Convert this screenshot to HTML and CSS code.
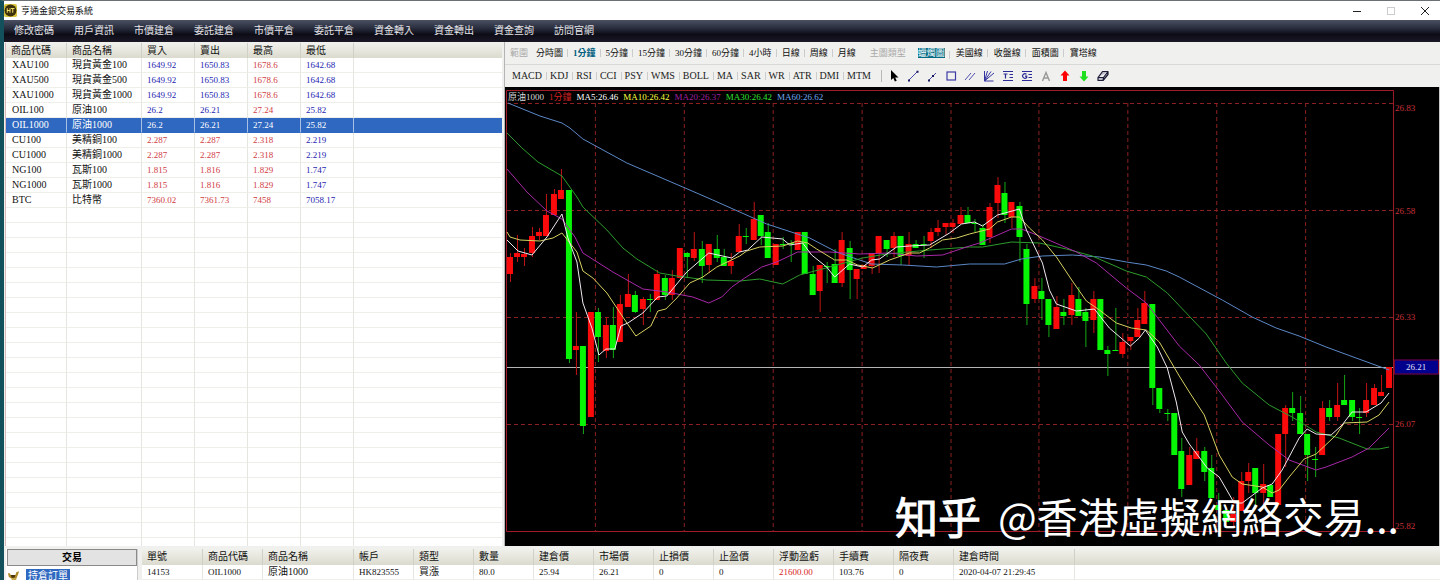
FILE: index.html
```html
<!DOCTYPE html>
<html lang="zh-Hant">
<head>
<meta charset="utf-8">
<meta name="viewport" content="width=device-width, initial-scale=1">
<title>亨通金銀交易系統</title>
<link rel="stylesheet" href="styles.css">
</head>
<body>
<div class="app">
  <header class="titlebar">
    <svg class="logo" viewBox="0 0 14 14" aria-hidden="true">
      <rect width="14" height="14" rx="2" fill="#d8c43c"/>
      <circle cx="7" cy="7" r="6.4" fill="#3a300c"/>
      <path d="M3.5 4.5v5M3.5 7h3M6.5 4.5v5M7.5 4.8h3.8M9.4 4.8v4.7" stroke="#f2dc62" stroke-width="1.1" fill="none"/>
    </svg>
    <h1 class="title">亨通金銀交易系統</h1>
    <div class="window-controls">
      <button type="button" aria-label="最小化"><svg viewBox="0 0 10 10"><path d="M1 5.5h8" stroke="#222"/></svg></button>
      <button type="button" aria-label="最大化" disabled><svg viewBox="0 0 10 10"><rect x="1.5" y="1.5" width="7" height="7" fill="none" stroke="#ccc"/></svg></button>
      <button type="button" aria-label="關閉"><svg viewBox="0 0 10 10"><path d="M1 1l8 8M9 1l-8 8" stroke="#222"/></svg></button>
    </div>
  </header>

  <nav class="menubar">
    <button type="button">修改密碼</button>
    <button type="button">用戶資訊</button>
    <button type="button">市價建倉</button>
    <button type="button">委託建倉</button>
    <button type="button">市價平倉</button>
    <button type="button">委託平倉</button>
    <button type="button">資金轉入</button>
    <button type="button">資金轉出</button>
    <button type="button">資金查詢</button>
    <button type="button">訪問官網</button>
  </nav>

  <main class="workspace">
    <section class="quotes-pane">
      <table class="grid quotes">
        <colgroup><col class="q-code"><col class="q-name"><col class="q-price"><col class="q-price"><col class="q-price"><col class="q-price"><col></colgroup>
        <thead><tr><th>商品代碼</th><th>商品名稱</th><th>買入</th><th>賣出</th><th>最高</th><th>最低</th><th></th></tr></thead>
        <tbody>
          <tr><td class="code">XAU100</td><td class="name">現貨黃金100</td><td class="down">1649.92</td><td class="down">1650.83</td><td class="up">1678.6</td><td class="down">1642.68</td><td></td></tr>
          <tr><td class="code">XAU500</td><td class="name">現貨黃金500</td><td class="down">1649.92</td><td class="down">1650.83</td><td class="up">1678.6</td><td class="down">1642.68</td><td></td></tr>
          <tr><td class="code">XAU1000</td><td class="name">現貨黃金1000</td><td class="down">1649.92</td><td class="down">1650.83</td><td class="up">1678.6</td><td class="down">1642.68</td><td></td></tr>
          <tr><td class="code">OIL100</td><td class="name">原油100</td><td class="down">26.2</td><td class="down">26.21</td><td class="up">27.24</td><td class="down">25.82</td><td></td></tr>
          <tr class="selected"><td class="code">OIL1000</td><td class="name">原油1000</td><td>26.2</td><td>26.21</td><td>27.24</td><td>25.82</td><td></td></tr>
          <tr><td class="code">CU100</td><td class="name">美精銅100</td><td class="up">2.287</td><td class="up">2.287</td><td class="up">2.318</td><td class="down">2.219</td><td></td></tr>
          <tr><td class="code">CU1000</td><td class="name">美精銅1000</td><td class="up">2.287</td><td class="up">2.287</td><td class="up">2.318</td><td class="down">2.219</td><td></td></tr>
          <tr><td class="code">NG100</td><td class="name">瓦斯100</td><td class="up">1.815</td><td class="up">1.816</td><td class="up">1.829</td><td class="down">1.747</td><td></td></tr>
          <tr><td class="code">NG1000</td><td class="name">瓦斯1000</td><td class="up">1.815</td><td class="up">1.816</td><td class="up">1.829</td><td class="down">1.747</td><td></td></tr>
          <tr><td class="code">BTC</td><td class="name">比特幣</td><td class="up">7360.02</td><td class="up">7361.73</td><td class="up">7458</td><td class="down">7058.17</td><td></td></tr>
          <tr class="filler"><td></td><td></td><td></td><td></td><td></td><td></td><td></td></tr>
        </tbody>
      </table>
    </section>

    <section class="chart-pane">
      <div class="toolbar periods">
        <span class="caption">範圍</span>
        <div class="group">
          <button type="button">分時圖</button>
          <button type="button" class="active">1分鐘</button>
          <button type="button">5分鐘</button>
          <button type="button">15分鐘</button>
          <button type="button">30分鐘</button>
          <button type="button">60分鐘</button>
          <button type="button">4小時</button>
          <button type="button">日線</button>
          <button type="button">周線</button>
          <button type="button">月線</button>
        </div>
        <span class="caption">主圖類型</span>
        <div class="group styles">
          <button type="button" class="chosen">蠟燭圖</button>
          <button type="button">美國線</button>
          <button type="button">收盤線</button>
          <button type="button">面積圖</button>
          <button type="button">寶塔線</button>
        </div>
      </div>
      <div class="toolbar indicators">
        <div class="group">
          <button type="button">MACD</button>
          <button type="button">KDJ</button>
          <button type="button">RSI</button>
          <button type="button">CCI</button>
          <button type="button">PSY</button>
          <button type="button">WMS</button>
          <button type="button">BOLL</button>
          <button type="button">MA</button>
          <button type="button">SAR</button>
          <button type="button">WR</button>
          <button type="button">ATR</button>
          <button type="button">DMI</button>
          <button type="button">MTM</button>
        </div>
        <div class="tools">
          <button type="button" aria-label="選取"><svg viewBox="0 0 12 12"><path d="M3 0v10l2.300-2 1.600 3.600 1.800-.8L7.200 7.500h3.300z" fill="#000"/></svg></button>
          <button type="button" aria-label="直線"><svg viewBox="0 0 12 12"><path d="M2 10l8-8" stroke="#4848a8"/><path d="M1 9.500h2v2H1zM9.500 .8h2v2h-2z" fill="#181860"/></svg></button>
          <button type="button" aria-label="射線"><svg viewBox="0 0 12 12"><path d="M2 11l8-8" stroke="#4848a8"/><path d="M2 9.500h2v2H2zM6 5h2v2H6z" fill="#181860"/></svg></button>
          <button type="button" aria-label="矩形"><svg viewBox="0 0 12 12"><rect x="2" y="2" width="8.500" height="8" fill="none" stroke="#3c3ca8" stroke-width="1.200"/></svg></button>
          <button type="button" aria-label="平行線"><svg viewBox="0 0 12 12"><path d="M1 10l6-7M5 10l6-7" stroke="#5050b0" fill="none"/></svg></button>
          <button type="button" aria-label="扇形線"><svg viewBox="0 0 12 12"><path d="M1.500 1v10h9M1.500 11L4.500 1M1.500 11L8 1.500M1.500 11L11 3" stroke="#3434a0" stroke-width="1" fill="none"/></svg></button>
          <button type="button" aria-label="黃金分割"><svg viewBox="0 0 12 12"><path d="M1 1.500h10M1 10.500h10M1.500 4h4M3.500 4v4.500M7.500 4.500H11M7.500 7.500H11" stroke="#2c2c98" stroke-width="1.200" fill="none"/></svg></button>
          <button type="button" aria-label="百分比線"><svg viewBox="0 0 12 12"><path d="M1 1.500h10M1 10.500h10M5.500 4.200A2.300 2.300 0 1 0 5.700 7.500V6.200H4M7.500 4.500H11M7.500 7.500H11" stroke="#2c2c98" stroke-width="1.200" fill="none"/></svg></button>
          <button type="button" aria-label="文字"><svg viewBox="0 0 12 12"><path d="M2.500 11L6 2.500 9.500 11M4 8h4" stroke="#999" stroke-width="1.400" fill="none"/></svg></button>
          <button type="button" aria-label="向上箭頭"><svg viewBox="0 0 12 12"><path d="M6 .5l4.500 5H8V11H4V5.500H1.500z" fill="#f00"/></svg></button>
          <button type="button" aria-label="向下箭頭"><svg viewBox="0 0 12 12"><path d="M6 11.500l4.500-5H8V1H4v5.500H1.500z" fill="#1ee01e"/></svg></button>
          <button type="button" aria-label="橡皮擦"><svg viewBox="0 0 12 12"><path d="M1 7.500L5.500 1.500H11L6.500 7.500zM1 7.500v3h5L11 4.500v-3M6.500 7.500L6 10.500" fill="#b8b8c8" stroke="#1c1c38" stroke-width="1.200" stroke-linejoin="round"/></svg></button>
        </div>
      </div>

      <div class="chart">
        <svg id="plot" class="plot" viewBox="505 87 935 459" preserveAspectRatio="none" role="img" aria-label="原油1000 1分鐘"></svg>
        <div class="legend">
          <span class="symbol">原油1000</span>
          <span class="period">1分鐘</span>
          <span class="ma5">MA5:26.46</span>
          <span class="ma10">MA10:26.42</span>
          <span class="ma20">MA20:26.37</span>
          <span class="ma30">MA30:26.42</span>
          <span class="ma60">MA60:26.62</span>
        </div>
        <div class="axis">
          <span class="tick t1">26.83</span>
          <span class="tick t2">26.58</span>
          <span class="tick t3">26.33</span>
          <span class="tick last">26.21</span>
          <span class="tick t4">26.07</span>
          <span class="tick t5">25.82</span>
        </div>
        <div class="watermark"><b>知乎</b><span>@香港虛擬網絡交易...</span></div>
      </div>
    </section>
  </main>

  <section class="orders-pane">
    <aside class="side">
      <button type="button" class="trade">交易</button>
      <div class="tree-item">
        <svg viewBox="0 0 14 12" aria-hidden="true"><path d="M1 3h2l1 2h5l1-3 3-1-1 3-2 5H5L2 7z" fill="#b08a28"/><path d="M4 5h5l-1 3H5z" fill="#4a3608"/><path d="M5 9h5v2H5z" fill="#caa84a"/></svg>
        <span class="node">持倉訂單</span>
      </div>
    </aside>
    <div class="orders-wrap">
      <table class="grid orders">
        <colgroup><col class="o-id"><col class="o-std"><col class="o-name"><col class="o-std"><col class="o-std"><col class="o-std"><col class="o-std"><col class="o-std"><col class="o-std"><col class="o-std"><col class="o-std"><col class="o-std"><col class="o-std"><col class="o-time"><col></colgroup>
        <thead><tr><th>單號</th><th>商品代碼</th><th>商品名稱</th><th>帳戶</th><th>類型</th><th>數量</th><th>建倉價</th><th>市場價</th><th>止損價</th><th>止盈價</th><th>浮動盈虧</th><th>手續費</th><th>隔夜費</th><th>建倉時間</th><th></th></tr></thead>
        <tbody><tr><td>14153</td><td>OIL1000</td><td class="name">原油1000</td><td>HK823555</td><td class="name">買漲</td><td>80.0</td><td>25.94</td><td>26.21</td><td>0</td><td>0</td><td class="loss">21600.00</td><td>103.76</td><td>0</td><td>2020-04-07 21:29:45</td><td></td></tr></tbody>
      </table>
    </div>
  </section>
</div>
<script src="chart.js"></script>
</body>
</html>
```

FILE: styles.css
```css
* { box-sizing: border-box; }

body {
  margin: 0;
  font-family: "Liberation Serif", "Noto Sans CJK TC", serif;
  font-size: 10px;
  line-height: 14px;
  color: #111;
  background: #fff;
}

button {
  font: inherit;
  color: inherit;
  background: none;
  border: 0;
  padding: 0;
  margin: 0;
  white-space: nowrap;
}

.app {
  display: flex;
  flex-direction: column;
  height: 100vh;
  overflow: hidden;
  border-top: 1px solid #6b7074;
  border-left: 4px solid #12505c;
  background: #f0f0ee;
}

/* Title bar */
.titlebar {
  display: flex;
  align-items: center;
  gap: 4px;
  height: 19px;
  flex: none;
  background: #fff;
}
.logo { width: 13px; height: 13px; }
.title { margin: 0; font-size: 9px; font-weight: 400; line-height: 14px; }
.window-controls { display: flex; margin-left: auto; }
.window-controls button { display: flex; justify-content: center; width: 34px; padding-left: 4px; }
.window-controls svg { width: 10px; height: 10px; }

/* Menu */
.menubar {
  display: flex;
  flex: none;
  height: 22px;
  background: linear-gradient(#4a5062 0, #2b3040 35%, #0c0c16 65%, #1c1826 100%);
  color: #e4e4e8;
}
.menubar button { width: 60px; }

/* Workspace */
.workspace {
  display: grid;
  grid-template-columns: minmax(0, 500fr) minmax(0, 936fr);
  flex: 1;
  min-height: 0;
}
.quotes-pane {
  margin: 1px 2px 0 1px;
  border-left: 1px solid #d8b8b8;
  background: #fff;
  overflow: hidden;
}

/* Tables */
.grid { width: 100%; border-collapse: separate; border-spacing: 0; table-layout: fixed; }
.grid th, .grid td {
  height: 15px;
  padding: 0 0 0 6px;
  line-height: 14px;
  text-align: left;
  font-weight: 400;
  white-space: nowrap;
  border-right: 1px solid #e6e6e0;
}
.grid th {
  font-size: 10px;
  padding-left: 5px;
  border-right-color: #d0d0c6;
  background: linear-gradient(#f1f1ed, #e4e4da 60%, #dadacf);
}
.grid td { font-size: 9px; border-bottom: 1px solid #efefea; }
.grid td.code { font-size: 10px; }
.grid td.name { font-size: 10px; padding-left: 5px; }
.grid tr > :last-child { border-right: 0; }
.up { color: #d03c44; }
.down { color: #2424b0; }
.grid .selected td { background: #2f68c0; color: #fff; border-bottom-color: #2f68c0; border-right-color: #a8c0e4; }
.quotes .filler td {
  height: 400px;
  border-bottom: 0;
  background: repeating-linear-gradient(transparent 0 14px, #efefea 14px 15px);
}
.q-code { width: 61px; }
.q-name { width: 75px; }
.q-price { width: 53px; }
.quotes th:nth-child(n+3), .quotes td:nth-child(n+3) { padding-left: 5px; }

/* Toolbars */
.chart-pane { display: flex; flex-direction: column; min-width: 0; border-left: 1px solid #b4b4b4; }
.toolbar { display: flex; align-items: center; flex: none; overflow: hidden; }
.periods { height: 23px; padding-left: 5px; gap: 8px; font-size: 9px; border-bottom: 1px solid #d8d8d6; }
.caption { color: #aaa; white-space: nowrap; }
.group { display: flex; align-items: center; }
.group button { position: relative; margin-right: 10px; }
.group button:not(:last-child)::after {
  content: "";
  position: absolute;
  right: -5px;
  top: 3px;
  height: 8px;
  border-right: 1px solid #ccc;
}
.group button:last-child { margin-right: 6px; }
.styles { gap: 1px; }
.group .active { color: #006080; font-weight: 700; }
.group .chosen { margin-left: 4px; background: #006a84; color: #fff; line-height: 10px; }
.indicators { height: 22px; padding-left: 7px; color: #222; }
.indicators .group button { margin-right: 8px; }
.tools { display: flex; gap: 7px; padding-left: 6px; border-left: 1px solid #b8b8b8; margin-left: 2px; }
.tools button { display: flex; }
.tools svg { width: 12px; height: 12px; }

/* Chart */
.chart {
  position: relative;
  flex: 1;
  min-height: 0;
  overflow: hidden;
  background: #000;
  border-right: 1px solid #c8c8c8;
  font-size: 9px;
}
.plot { position: absolute; inset: 0; width: 100%; height: 100%; }
.plot path, .plot line { fill: none; vector-effect: non-scaling-stroke; }
.plot .frame { stroke: #a01c28; }
.plot .guide { stroke: #8c2020; stroke-dasharray: 4 3; }
.plot .price { stroke: #b4b4b4; }
.plot .rise { fill: #fa0a0a; }
.plot .fall { fill: #06f606; }
.plot .wick-rise { fill: #c01414; }
.plot .wick-fall { fill: #14a814; }
.plot .line5 { stroke: #f0e8f0; }
.plot .line10 { stroke: #d8d060; }
.plot .line20 { stroke: #a828a8; }
.plot .line30 { stroke: #2c9c2c; }
.plot .line60 { stroke: #5c88c8; }

.legend { position: absolute; left: 3px; top: 3px; display: flex; gap: 5px; white-space: nowrap; }
.symbol { color: #d8d8d8; }
.period { color: #d02020; }
.ma5 { color: #fff; }
.ma10 { color: #ffff40; }
.ma20 { color: #a020a0; }
.ma30 { color: #30e030; }
.ma60 { color: #70a8f0; }

.axis { position: absolute; top: 0; bottom: 0; right: 0; width: 45px; }
.tick { position: absolute; left: 1px; color: #c83038; transform: translateY(-50%); }
.t1 { top: 4.6%; }
.t2 { top: 27%; }
.t3 { top: 50.2%; }
.t4 { top: 73.4%; }
.t5 { top: 95.6%; }
.tick.last {
  top: 61.1%;
  left: 0;
  right: 0;
  padding-left: 11px;
  background: #00008c;
  border: 1px solid #800020;
  color: #e0e0f8;
  line-height: 13px;
}

.watermark {
  position: absolute;
  right: 40px;
  bottom: 0;
  display: flex;
  align-items: center;
  gap: 17px;
  color: #fff;
  font-family: "Noto Sans CJK TC", sans-serif;
  font-size: 41px;
  line-height: 62px;
  white-space: nowrap;
  pointer-events: none;
}
.watermark b { font-size: 43px; font-weight: 400; -webkit-text-stroke: 1px #fff; }

/* Orders */
.orders-pane {
  display: flex;
  flex: none;
  height: 34px;
  padding: 3px 0 0 2px;
  overflow: hidden;
}
.side { flex: none; width: 132px; background: #fff; border-right: 1px solid #ccc; }
.trade {
  display: block;
  width: 130px;
  height: 17px;
  margin-left: 1px;
  border: 1px solid #8a8a8a;
  background: #e3e3e3;
  color: #000;
  font-weight: 700;
  line-height: 14px;
}
.tree-item { display: flex; align-items: center; gap: 6px; padding: 3px 0 0 1px; }
.tree-item svg { width: 13px; height: 12px; }
.node { padding: 0 2px; background: #2f68c0; color: #fff; font-size: 10px; }
.orders-wrap { flex: 1; min-width: 0; margin-left: 4px; background: #fff; overflow: hidden; }
.orders th { height: 16px; }
.orders td { padding-left: 5px; }
.orders .name { padding-left: 5px; }
.o-id { width: 61px; }
.o-std { width: 60px; }
.o-name { width: 91px; }
.o-time { width: 121px; }
.loss { color: #d81c24; }
```

FILE: chart.js
```js
// Candles: [rise?, bodyTop, bodyBottom, wickTop, wickBottom], in thirds of a
// plot unit, measured from the base of their segment.
const segments = [
  { base: 300, rows: [
    [1,470,522,460,546],[1,459,472,405,485],[1,461,472,445,498],[1,408,460,382,470],
    [1,396,408,384,420],[1,345,408,282,408],[1,282,346,268,346],[1,269,297,206,297],
    [0,269,776,269,788],[1,737,751,635,825],[0,738,978,738,1003],[1,635,952,635,952],
    [0,635,712,625,787],[1,674,752,650,775],[0,674,750,620,775],[1,612,726,585,726],
    [1,583,622,522,622],[0,584,636,572,640],[1,597,626,590,674],[0,597,600,582,636],
    [1,521,600,510,600],[0,533,585,525,600],[1,533,585,510,600],[1,445,533,445,540],
    [0,459,472,455,535],[1,446,473,395,484],[0,446,498,423,548],[1,432,496,432,520],
    [0,446,473,406,485],[0,471,498,446,498],[1,484,498,458,522]
  ]},
  { base: 570, rows: [
    [1,138,185,102,185],[0,137,140,115,162],[1,87,150,37,150],[0,75,137,75,165],
    [0,126,204,100,204],[1,163,225,163,225],[0,163,166,140,178],[0,160,163,150,215],
    [1,126,180,126,180],[0,126,252,126,252],[0,252,315,228,315],[1,226,302,226,366],
    [0,228,231,215,280],[0,222,278,178,278],[1,150,278,126,290],[0,175,240,152,328],
    [1,238,266,238,328],[1,226,237,226,237],[1,190,228,190,252],[1,138,190,138,250],
    [0,150,178,150,200],[1,138,175,126,200],[0,138,198,138,225],[1,163,198,126,225],
    [0,163,175,150,175],[0,163,166,138,205],[1,126,153,113,175],[1,113,126,90,138],
    [1,99,112,99,135],[1,99,112,88,130]
  ]},
  { base: 480, rows: [
    [1,165,192,140,192],[0,165,190,140,190],[0,188,191,178,215],[0,203,255,192,255],
    [1,140,230,128,250],[1,75,128,50,175],[0,100,165,65,190],[1,126,170,126,205],
    [0,139,230,125,305],[0,266,432,252,495],[1,378,417,354,430],[0,392,418,355,480],
    [0,417,494,417,530],[1,441,507,408,507],[0,456,468,418,495],[1,404,466,368,495],
    [0,417,469,380,469],[0,456,482,445,560],[1,417,480,392,518],[0,417,570,417,570],
    [0,570,582,558,647],[0,569,572,443,573],[1,545,582,520,595],[1,530,544,530,570],
    [1,480,532,443,532]
  ]},
  { base: 840, rows: [
    [1,70,133,32,133],[0,72,324,72,375],[0,324,387,324,398],[0,399,402,388,422],
    [0,399,524,399,524],[0,512,627,475,652],[1,525,614,500,614],[1,512,537,475,537],
    [0,512,575,500,602],[0,563,654,525,654],[0,675,690,640,700],[0,690,727,690,727],
    [1,702,727,650,740],[1,602,692,577,692],[1,575,602,550,640],[0,563,640,563,680],
    [1,612,640,552,680],[0,614,652,614,652],[1,462,675,462,675],[1,384,462,374,560],
    [0,384,398,336,424],[0,399,462,348,462],[0,462,524,462,602],[0,538,541,502,590],
    [1,384,524,362,524],[0,384,411,360,424],[1,374,411,310,424],[0,360,374,286,374],
    [0,361,411,361,424],[0,411,414,385,462],[1,360,398,310,410],[1,324,374,312,374],
    [1,336,348,285,348],[1,262,324,262,324]
  ]}
];

const averages = {
  line60: "508,103 540,116 562,123 570,128 583,139 627,163 683,187 713,200 740,212 767,224 810,238 837,252 857,259 872,264 903,265 937,267 970,264 1005,264 1022,259 1043,256 1073,255 1100,257 1127,262 1147,265 1167,271 1180,277 1223,300 1253,317 1277,328 1300,336 1327,347 1357,358 1390,370",
  line30: "507,133 522,148 538,162 562,176 577,197 583,207 607,230 623,248 637,259 660,273 677,276 707,280 740,281 760,279 783,284 800,275 830,267 863,258 887,254 930,250 970,247 983,247 1012,242 1040,243 1067,249 1093,256 1127,271 1147,277 1168,293 1207,334 1227,363 1243,383 1270,405 1293,417 1317,432 1340,438 1368,449 1380,449 1390,447",
  line20: "507,169 527,192 547,211 562,219 575,237 583,253 613,272 643,289 667,292 693,297 709,303 722,297 732,287 745,278 762,267 777,262 798,252 830,252 860,254 890,253 917,256 943,255 970,246 980,243 1012,229 1022,229 1040,236 1077,252 1097,263 1127,288 1147,303 1180,346 1200,365 1223,395 1243,422 1270,445 1290,460 1317,470 1327,467 1353,457 1370,448 1390,428",
  line10: "507,232 510,237 520,240 540,241 553,238 562,233 577,252 583,271 593,278 607,293 625,320 636,336 651,326 658,311 666,309 677,298 690,283 703,277 717,267 740,256 747,251 760,247 783,246 798,241 808,243 817,249 835,260 847,260 858,265 873,268 890,260 910,253 920,253 930,248 943,240 957,238 970,234 990,229 998,222 1012,217 1020,217 1030,228 1043,240 1057,257 1073,281 1087,301 1100,310 1117,323 1132,328 1147,330 1160,342 1180,376 1190,392 1205,415 1220,455 1233,477 1243,484 1263,487 1273,493 1280,490 1290,477 1305,459 1317,454 1337,435 1345,423 1368,422 1380,415 1390,402",
  line5: "507,240 518,251 532,255 547,237 562,214 568,238 577,262 583,303 592,328 599,355 606,349 615,349 621,326 628,323 643,313 658,297 667,296 687,272 709,253 732,258 740,252 748,250 762,237 783,239 790,245 803,243 812,255 827,267 835,277 850,264 863,267 872,260 880,259 897,247 910,246 930,245 950,233 962,224 975,222 983,226 998,215 1020,209 1027,230 1043,263 1050,290 1057,304 1077,311 1095,309 1110,328 1131,346 1140,338 1146,330 1158,347 1168,368 1177,402 1183,432 1190,444 1208,468 1220,477 1235,503 1243,503 1263,488 1273,484 1283,470 1300,438 1308,429 1317,434 1332,435 1343,425 1353,412 1367,412 1382,403 1390,393"
};

const svg = document.getElementById("plot");
function add(tag, attrs) {
  const el = document.createElementNS("http://www.w3.org/2000/svg", tag);
  for (const key in attrs) el.setAttribute(key, attrs[key]);
  svg.appendChild(el);
}

for (const y of [103.5, 210.5, 317.5, 424.5]) add("line", { class: "guide", x1: 507, x2: 1394, y1: y, y2: y });
for (let i = 1; i < 10; i++) {
  const x = Math.round(506 + i * 88.9) + 0.5;
  add("line", { class: "guide", x1: x, x2: x, y1: 103, y2: 531 });
}
add("path", { class: "frame", d: "M506.5 531.5V90.5H1394.5V531.5z" });
add("line", { class: "price", x1: 507, x2: 1394, y1: 367.5, y2: 367.5 });

let index = 0;
for (const { base, rows } of segments) {
  for (const [rise, top, bottom, high, low] of rows) {
    const at = v => Math.round((base + v) / 3);
    const x = Math.round(509.5 + index * 7.395);
    const kind = rise ? "rise" : "fall";
    add("rect", { class: "wick-" + kind, x: x, y: at(high), width: 1, height: at(low) - at(high) });
    add("rect", { class: kind, x: x - 3, y: at(top), width: 6, height: Math.max(1, at(bottom) - at(top)) });
    index++;
  }
}
for (const name in averages) add("path", { class: name, d: "M" + averages[name] });
```
